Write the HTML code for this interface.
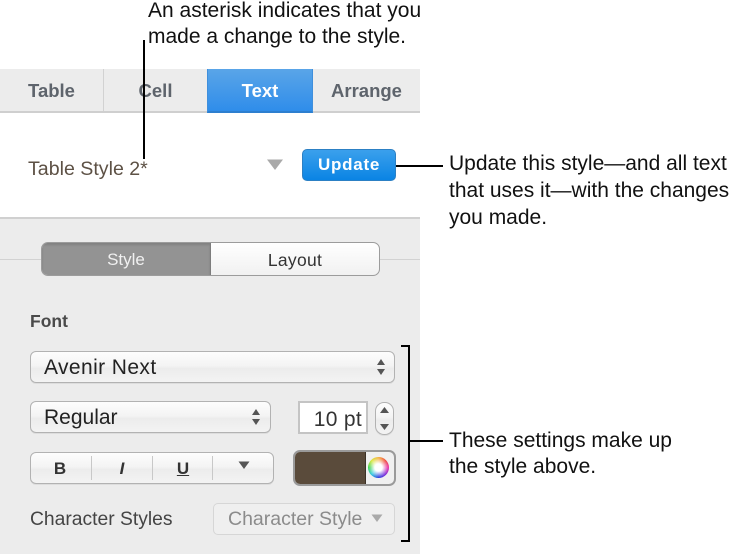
<!DOCTYPE html>
<html>
<head>
<meta charset="utf-8">
<style>
html,body{margin:0;padding:0;background:#fff}
body{width:736px;height:554px;position:relative;overflow:hidden;font-family:"Liberation Sans",sans-serif}
div,span.a{position:absolute;box-sizing:border-box}
.t{white-space:nowrap;line-height:20px}
.c{font-size:21px;color:#111}
.btn{background:linear-gradient(#fdfdfd,#f4f4f4 45%,#ececec 55%,#f3f3f3);border:1px solid #b2b2b2;border-radius:6px;box-shadow:0 1px 0 #ddd}
.ui{color:#222;font-size:19.5px}
.tab{font-weight:bold;font-size:18.5px;color:#5e646c;text-align:center;top:81px}
.k{background:#000}
</style>
</head>
<body>
<!-- panel -->
<div style="left:0;top:69px;width:420px;height:44px;background:#ececec;border-bottom:2px solid #cfcfcf"></div>
<div style="left:103px;top:69px;width:1px;height:42px;background:#d2d2d2"></div>
<div style="left:207px;top:69px;width:106px;height:44px;background:linear-gradient(#5aa5e8,#2f8dea);border-bottom:2px solid #2d7fcf;border-left:1px solid #3f8fdc;border-right:1px solid #3f8fdc"></div>
<div class="t tab" style="left:0;width:103px">Table</div>
<div class="t tab" style="left:104px;width:103px">Cell</div>
<div class="t tab" style="left:207px;width:106px;color:#fff">Text</div>
<div class="t tab" style="left:313px;width:107px">Arrange</div>
<div style="left:0;top:217px;width:420px;height:337px;background:#ececec;border-top:2px solid #d0d0d0"></div>

<!-- style row -->
<div class="t" style="left:28px;top:159px;font-size:19.6px;color:#5d5145">Table Style 2*</div>
<svg style="position:absolute;left:266px;top:159px" width="18" height="12"><path d="M1 0.500H17L9 11Z" fill="#a9a9a9"/></svg>
<div style="left:302px;top:149px;width:94px;height:32px;border-radius:5px;background:linear-gradient(#3ba0ec,#0a84e4);border:1px solid #2c80c4"></div>
<div class="t" style="left:302px;top:155px;width:94px;text-align:center;color:#fff;font-weight:bold;font-size:17px;letter-spacing:.75px">Update</div>

<!-- segmented -->
<div style="left:0;top:259px;width:42px;height:1px;background:#d2d2d2"></div>
<div style="left:379px;top:259px;width:41px;height:1px;background:#d2d2d2"></div>
<div style="left:41px;top:242px;width:339px;height:34px;border-radius:7px;border:1px solid #9c9c9c;background:linear-gradient(#fff,#f1f1f1);overflow:hidden">
  <div style="left:0;top:0;width:169px;height:32px;background:#939393;border-right:1px solid #7d7d7d;box-shadow:inset 0 2px 2px #808080"></div>
</div>
<div class="t" style="left:42px;top:250px;width:168px;text-align:center;color:#f0f0f0;font-size:17px">Style</div>
<div class="t" style="left:211px;top:250px;width:168px;text-align:center;color:#333;font-size:17.5px;letter-spacing:.3px">Layout</div>

<div class="t" style="left:30px;top:311px;font-weight:bold;font-size:17.5px;color:#4a4a4a">Font</div>

<!-- font select -->
<div class="btn" style="left:30px;top:351px;width:365px;height:32px"></div>
<div class="t ui" style="left:44px;top:358px;font-size:21px;letter-spacing:.4px">Avenir Next</div>
<svg style="position:absolute;left:376px;top:359px" width="10" height="17"><path d="M5 0L9 6H1ZM1 10H9L5 16Z" fill="#555"/></svg>

<!-- typeface select -->
<div class="btn" style="left:30px;top:401px;width:241px;height:32px"></div>
<div class="t ui" style="left:44px;top:408px;font-size:21px">Regular</div>
<svg style="position:absolute;left:251px;top:409px" width="10" height="17"><path d="M5 0L9 6H1ZM1 10H9L5 16Z" fill="#555"/></svg>

<!-- size -->
<div style="left:298px;top:401px;width:70px;height:33px;background:#fff;border:2px solid #c4c4c4"></div>
<div class="t ui" style="left:298px;top:410px;width:64px;text-align:right;color:#333;font-size:21px;letter-spacing:.3px">10 pt</div>
<div class="btn" style="left:375px;top:402px;width:19px;height:33px;border-radius:9px"></div>
<svg style="position:absolute;left:379px;top:407px" width="11" height="24"><path d="M5.500 0L10 6H1ZM1 17H10L5.500 23Z" fill="#555"/></svg>

<!-- BIU -->
<div class="btn" style="left:30px;top:452px;width:244px;height:32px"></div>
<div style="left:91px;top:456px;width:1px;height:24px;background:#c8c8c8"></div>
<div style="left:152px;top:456px;width:1px;height:24px;background:#c8c8c8"></div>
<div style="left:212px;top:456px;width:1px;height:24px;background:#c8c8c8"></div>
<div class="t" style="left:30px;top:459px;width:60px;text-align:center;font-weight:bold;font-size:17px;color:#333">B</div>
<div class="t" style="left:92px;top:459px;width:60px;text-align:center;font-weight:bold;font-style:italic;font-size:17px;color:#333">I</div>
<div class="t" style="left:153px;top:459px;width:60px;text-align:center;font-weight:bold;font-size:17px;color:#333;text-decoration:underline">U</div>
<svg style="position:absolute;left:238px;top:461px" width="12" height="9"><path d="M0.500 0.500H11.500L6 8Z" fill="#555"/></svg>

<!-- colour well -->
<div style="left:293px;top:450px;width:103px;height:36px;border-radius:7px;border:2px solid #9a9a9a;background:#f0f0f0;overflow:hidden">
  <div style="left:-2px;top:0;width:73px;height:34px;background:#5a4b3b;border-right:1px solid #3b3226"></div>
</div>
<div style="left:368px;top:457px;width:21px;height:21px;border-radius:50%;background:radial-gradient(circle,#fff 0 25%,rgba(255,255,255,0) 68%),conic-gradient(#f4b13c,#f0483c,#e82ca8,#7a28d8,#2b3fe0,#2cc8e0,#3cd44b,#d8e83c,#f4b13c)"></div>

<!-- character styles -->
<div class="t" style="left:30px;top:510px;font-size:19.3px;color:#444">Character Styles</div>
<div style="left:213px;top:503px;width:182px;height:32px;border:1px solid #d6d6d6;border-radius:5px;background:#efefef"></div>
<div class="t" style="left:228px;top:509px;font-size:19.5px;color:#8b8b8b">Character Style</div>
<svg style="position:absolute;left:371px;top:514px" width="12" height="9"><path d="M0.500 0.500H11.500L6 8Z" fill="#a9a9a9"/></svg>

<!-- callouts -->
<div class="k" style="left:143px;top:40px;width:2px;height:119px"></div>
<div class="k" style="left:396px;top:165px;width:47px;height:2px"></div>
<div class="k" style="left:408px;top:345px;width:2px;height:197px"></div>
<div class="k" style="left:401px;top:345px;width:9px;height:2px"></div>
<div class="k" style="left:401px;top:540px;width:9px;height:2px"></div>
<div class="k" style="left:409px;top:440px;width:34px;height:2px"></div>

<div class="t c" style="left:148px;top:1px">An asterisk indicates that you</div>
<div class="t c" style="left:148px;top:27px">made a change to the style.</div>
<div class="t c" style="left:449px;top:154px">Update this style—and all text</div>
<div class="t c" style="left:449px;top:181px">that uses it—with the changes</div>
<div class="t c" style="left:449px;top:208px">you made.</div>
<div class="t c" style="left:449px;top:431px">These settings make up</div>
<div class="t c" style="left:449px;top:457px">the style above.</div>
</body>
</html>
